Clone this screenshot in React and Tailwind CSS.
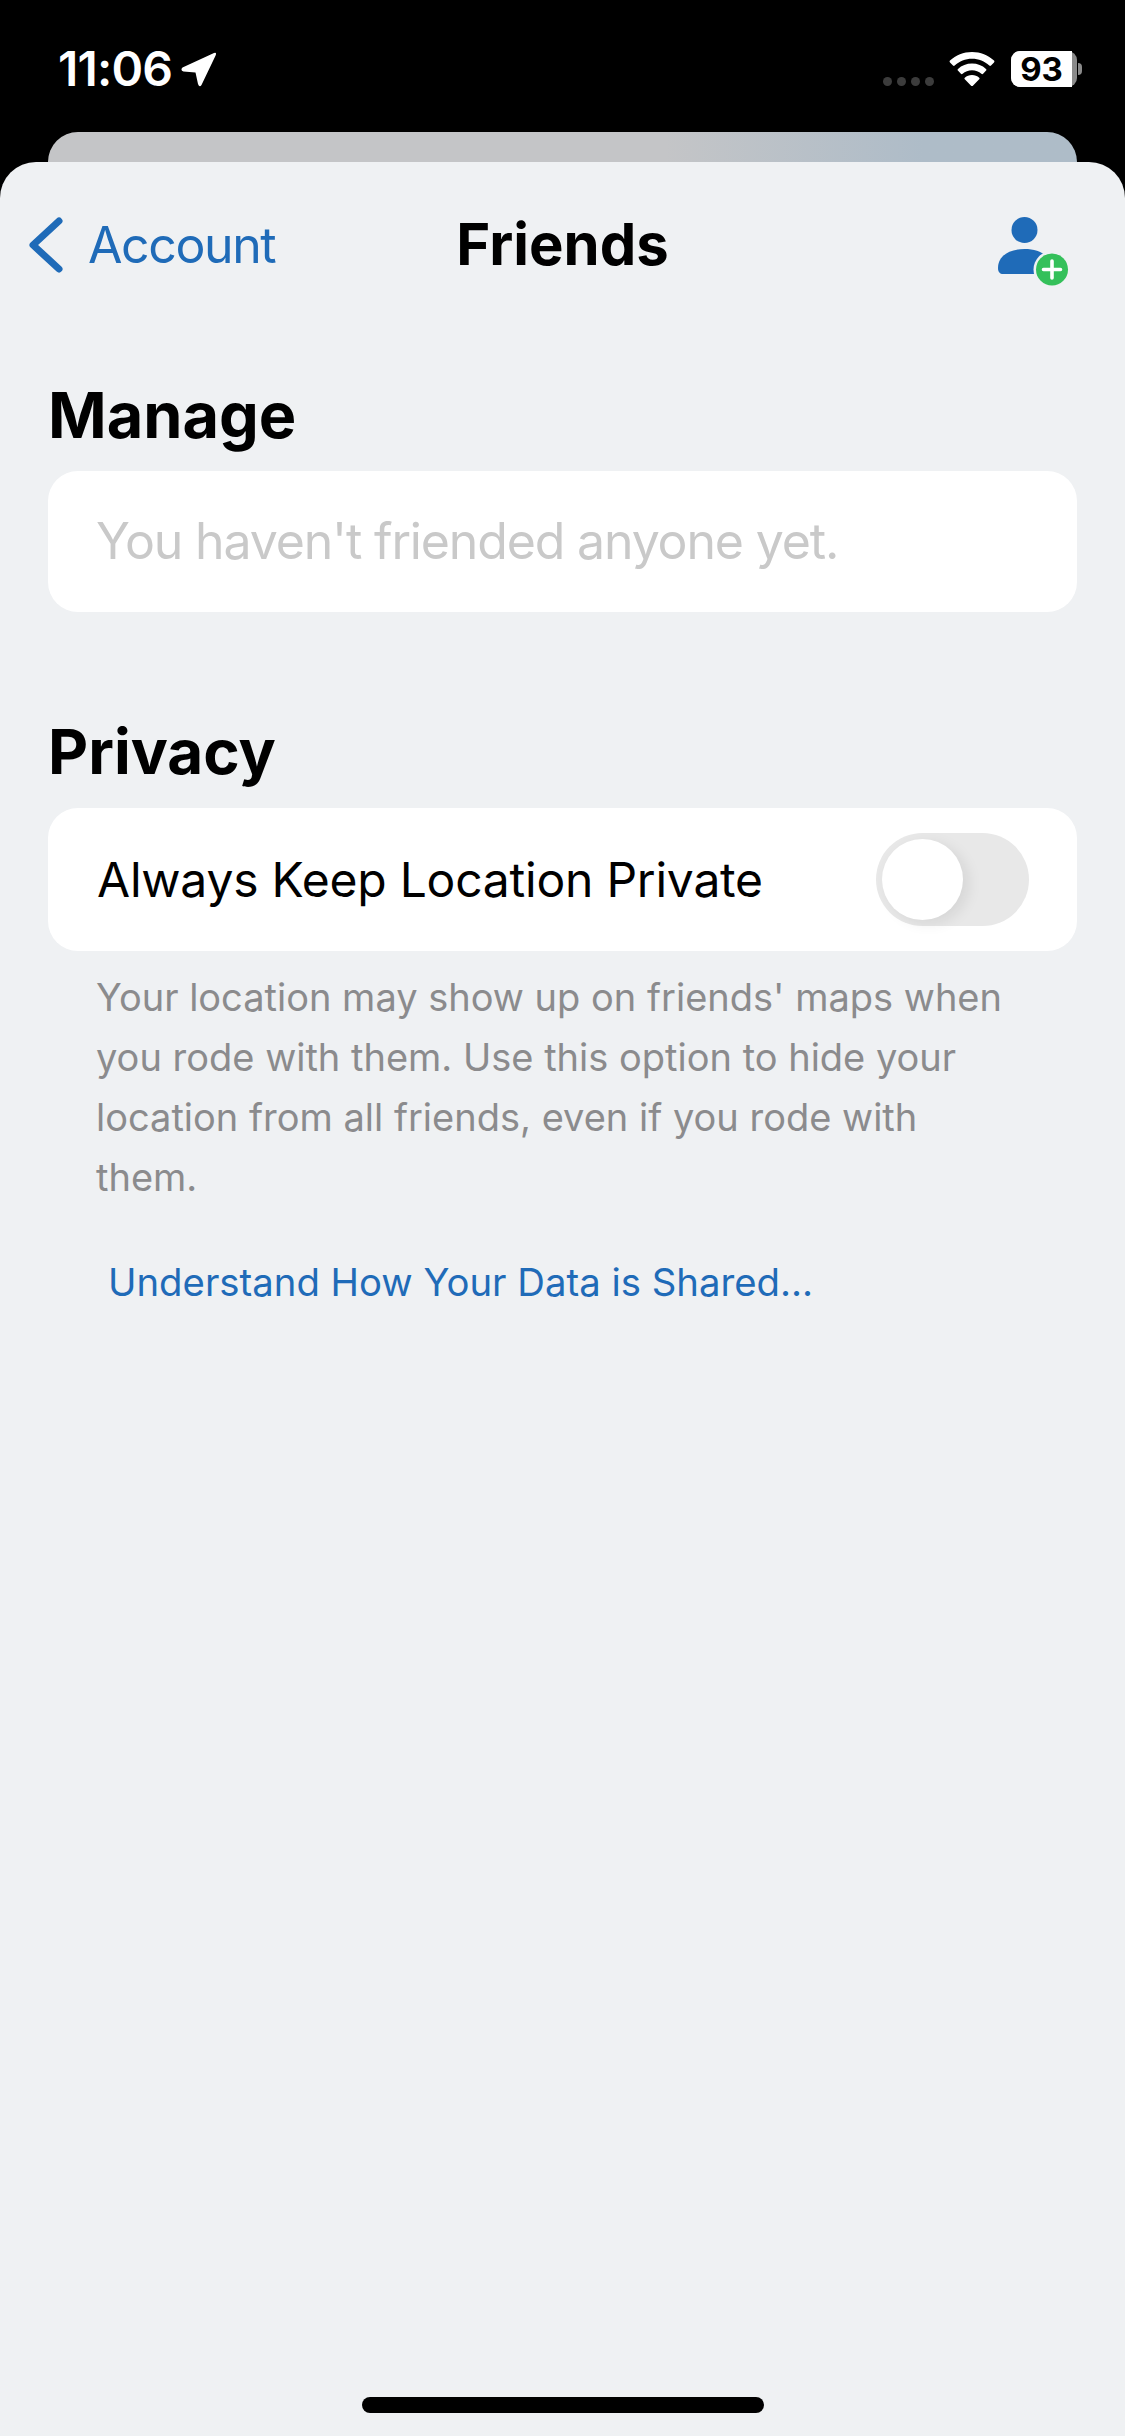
import React from "react";

const font = { fontFamily: "Inter, 'Liberation Sans', sans-serif" };

function LocationArrow() {
  return (
    <svg width="36" height="36" viewBox="0 0 36 36" className="ml-[9px] mt-[-1px]">
      <path d="M1.5 16.5 L33 2 Q36 1 34.6 4.5 L20.5 34 Q18.5 37 17 33 L14.5 21.5 L2.5 20.5 Q-1 19 1.5 16.5 Z" fill="#fff" />
    </svg>
  );
}

function Wifi() {
  return (
    <svg width="46" height="34" viewBox="0 0 46 34">
      <path d="M23 0C14.5 0 6.8 3.2 1 8.6c-.6.6-.6 1.2 0 1.8l3 3.2c.5.5 1.2.5 1.7 0C10.3 9.4 16.3 6.8 23 6.8s12.7 2.6 17.3 6.8c.5.5 1.2.5 1.7 0l3-3.2c.6-.6.6-1.2 0-1.8C39.2 3.2 31.5 0 23 0Z" fill="#fff" />
      <path d="M23 11.5c-5.4 0-10.3 2-14 5.4-.6.5-.6 1.2-.1 1.7l3 3.2c.5.5 1.1.5 1.7 0 2.5-2.2 5.8-3.5 9.4-3.5s6.9 1.3 9.4 3.5c.6.5 1.2.5 1.7 0l3-3.2c.5-.5.5-1.2-.1-1.7-3.7-3.4-8.6-5.4-14-5.4Z" fill="#fff" />
      <path d="M23 23c-2.8 0-5.3 1-7.2 2.7-.5.5-.5 1.1 0 1.6l6.3 6.4c.5.5 1.3.5 1.8 0l6.3-6.4c.5-.5.5-1.1 0-1.6C28.3 24 25.8 23 23 23Z" fill="#fff" />
    </svg>
  );
}

function AddFriend() {
  return (
    <svg width="72" height="72" viewBox="0 0 72 72">
      <circle cx="27.5" cy="14" r="13" fill="#1f6bb8" />
      <path d="M1 52 C1 40 12 33 27.5 33 C43 33 54 40 54 52 C54 56 52 58 49 58 H6 C3 58 1 56 1 52 Z" fill="#1f6bb8" />
      <circle cx="55" cy="53.5" r="18.5" fill="#eff1f3" />
      <circle cx="55" cy="53.5" r="16" fill="#34c05a" />
      <path d="M55 45 V62 M46.5 53.5 H63.5" stroke="#fff" strokeWidth="3.6" strokeLinecap="round" />
    </svg>
  );
}

export default function App() {
  return (
    <div className="flex h-[2436px] w-[1125px] flex-col overflow-hidden bg-black" style={font}>
      {/* status bar */}
      <div className="flex h-[132px] shrink-0 items-start justify-between pl-[58px] pr-[43px] pt-[44px]">
        <div className="flex items-center">
          <span className="text-[48px] leading-[50px] font-semibold tracking-[-0.8px] text-white">11:06</span>
          <LocationArrow />
        </div>
        <div className="mt-[7px] flex items-center">
          <div className="mr-[15px] mt-[24px] flex gap-[5px]">
            <span className="h-[9px] w-[9px] rounded-full bg-[#3c3c3c]" />
            <span className="h-[9px] w-[9px] rounded-full bg-[#3c3c3c]" />
            <span className="h-[9px] w-[9px] rounded-full bg-[#3c3c3c]" />
            <span className="h-[9px] w-[9px] rounded-full bg-[#3c3c3c]" />
          </div>
          <Wifi />
          <div className="ml-[16px] flex items-center">
            <div className="flex h-[36px] w-[66px] items-center rounded-[9px] bg-[#8a8a8a]">
              <div className="flex h-full w-[61px] items-center justify-center rounded-l-[9px] bg-white text-[33px] leading-[36px] font-bold text-black">93</div>
            </div>
            <div className="ml-[1px] h-[12px] w-[4px] rounded-r-full bg-[#8a8a8a]" />
          </div>
        </div>
      </div>

      {/* card behind the sheet */}
      <div className="mx-[48px] h-[30px] shrink-0 rounded-t-[36px] bg-gradient-to-r from-[#c4c5c7] from-60% to-[#aebcc8] to-85%" />

      {/* sheet */}
      <div className="flex flex-1 flex-col rounded-t-[36px] bg-[#eff1f3]">
        <div className="relative flex h-[160px] shrink-0 items-center justify-between pl-[28px] pr-[60px]">
          <div className="mt-[6px] flex items-center text-[#1f6bb8]">
            <svg width="36" height="60" viewBox="0 0 36 60">
              <path d="M31 6 L5 30 L31 54" fill="none" stroke="#1f6bb8" strokeWidth="7" strokeLinecap="round" strokeLinejoin="round" />
            </svg>
            <span className="ml-[24px] text-[50px] leading-[60px] tracking-[-1.4px]">Account</span>
          </div>
          <span className="absolute left-0 right-0 top-[52px] text-center text-[58px] leading-[60px] font-bold text-black">Friends</span>
          <div className="mt-[20px] mr-[-4px]">
            <AddFriend />
          </div>
        </div>

        <div className="px-[48px]">
          <h2 className="mt-[55px] text-[63px] leading-[76px] font-bold text-black">Manage</h2>
          <div className="mt-[18px] flex h-[141px] items-center rounded-[30px] bg-white pl-[48px] pr-[49px]">
            <span className="text-[50px] tracking-[-1.15px] text-[#c9c9c9]">You haven't friended anyone yet.</span>
          </div>

          <h2 className="mt-[102px] text-[62px] leading-[76px] font-bold text-black">Privacy</h2>
          <div className="mt-[18px] flex h-[143px] items-center justify-between rounded-[30px] bg-white pl-[49px] pr-[48px]">
            <span className="text-[48px] tracking-[-0.22px] text-black">Always Keep Location Private</span>
            <div className="flex h-[93px] w-[153px] items-center rounded-full bg-[#e8e8e8] pl-[6px]">
              <div className="h-[81px] w-[81px] rounded-full bg-white shadow-[6px_4px_14px_rgba(0,0,0,0.08)]" />
            </div>
          </div>

          <p className="mt-[16px] pl-[48px] pr-[49px] text-[38px] leading-[60px] text-[#8b8b8d]">
            Your location may show up on friends' maps when you rode with them. Use this option to hide your location from all friends, even if you rode with them.
          </p>
          <div className="mt-[45px] pl-[60px] text-[38.3px] leading-[60px] text-[#1f6bb8]">Understand How Your Data is Shared...</div>
        </div>

        <div className="mb-[23px] mt-auto h-[16px] w-[402px] self-center rounded-full bg-black" />
      </div>
    </div>
  );
}
